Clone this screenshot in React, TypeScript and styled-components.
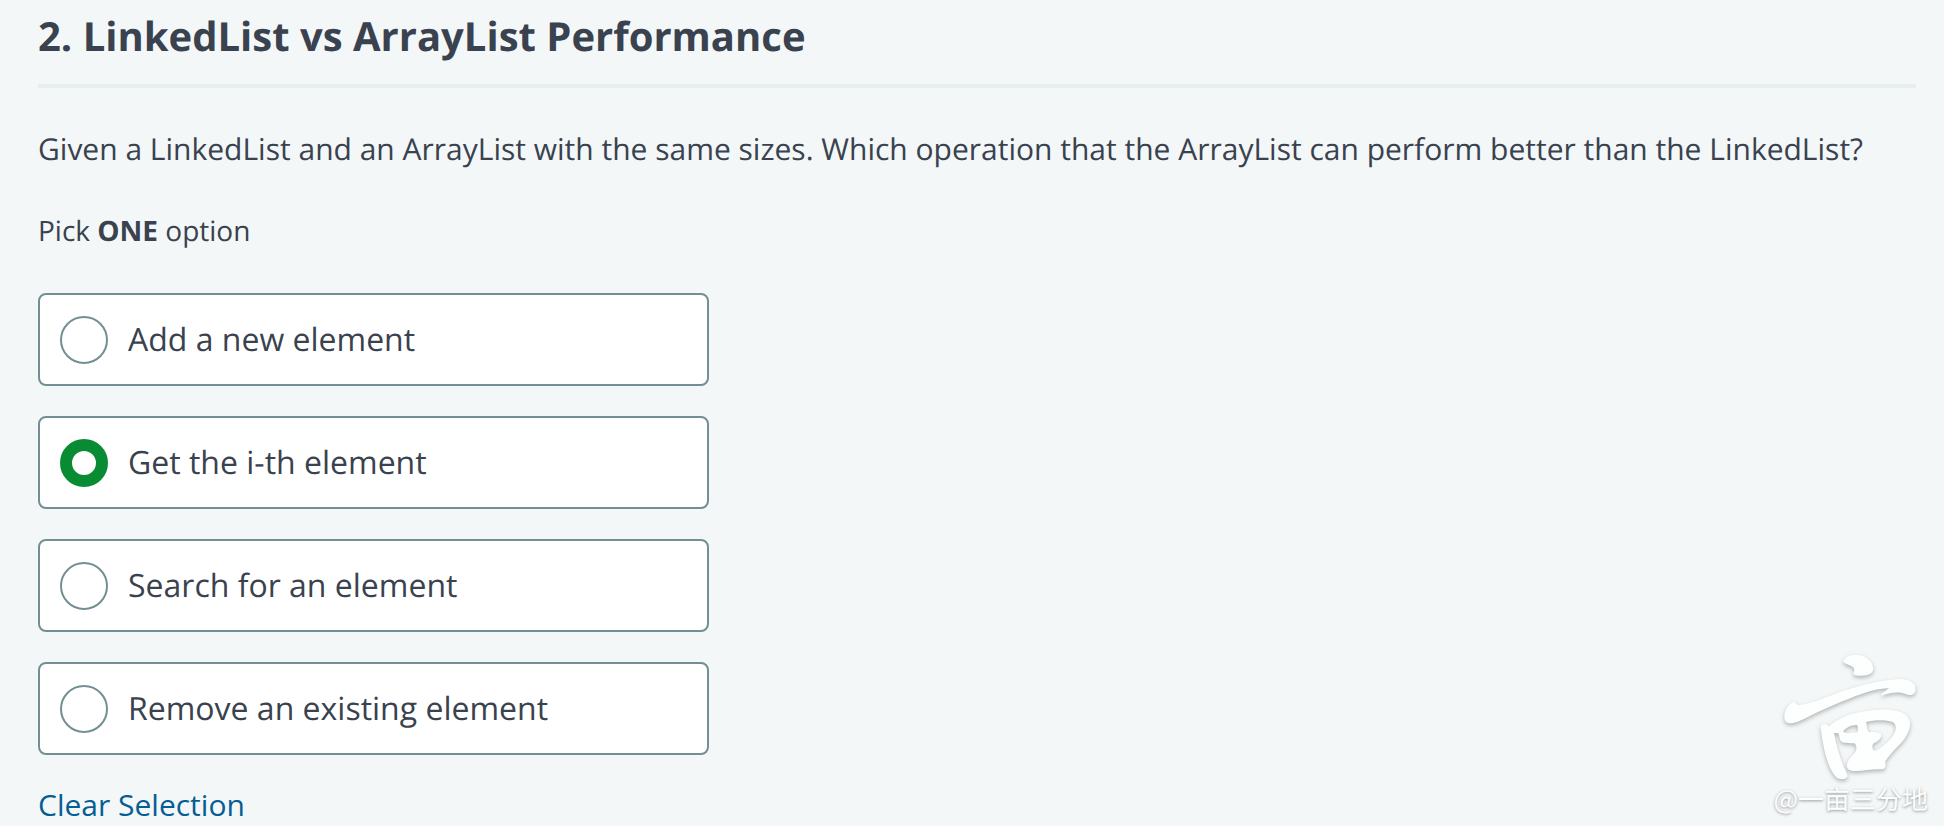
import React, { useState } from "react";
import styled, { createGlobalStyle } from "styled-components";

const GlobalStyle = createGlobalStyle`
  *, *::before, *::after {
    box-sizing: border-box;
  }
  body {
    margin: 0;
    background: #f3f7f8;
    color: #39424e;
    font-family: "Open Sans", "Noto Sans", sans-serif;
    text-rendering: geometricPrecision;
  }
`;

const Page = styled.main`
  position: relative;
  padding: 8px 28px 0 38px;
`;

const Title = styled.h1`
  margin: 0;
  padding-bottom: 20px;
  border-bottom: 4px solid #e6eeee;
  font-size: 40px;
  line-height: 56px;
  font-weight: 700;
`;

const Question = styled.p`
  margin: 41px 0 42px;
  font-size: 30px;
  line-height: 40px;
`;

const OptionGroup = styled.fieldset`
  margin: 0;
  padding: 0;
  border: 0;
  min-width: 0;
`;

const Hint = styled.legend`
  padding: 0;
  margin-bottom: 42px;
  font-size: 28px;
  line-height: 40px;
`;

const OptionList = styled.div`
  display: flex;
  flex-direction: column;
  gap: 30px;
  max-width: 671px;
`;

const Option = styled.label`
  display: flex;
  align-items: center;
  gap: 20px;
  min-height: 93px;
  padding: 20px;
  background: #fff;
  border: 2px solid #738f93;
  border-radius: 8px;
  font-size: 32px;
  line-height: 44px;
  cursor: pointer;
`;

const Radio = styled.input`
  appearance: none;
  flex: none;
  width: 48px;
  height: 48px;
  margin: 0;
  background: #fff;
  border: 2px solid #738f93;
  border-radius: 50%;
  cursor: pointer;

  &:checked {
    border: 12px solid #098b33;
  }
`;

const ClearButton = styled.button`
  display: block;
  margin: 30px 0 0;
  padding: 0;
  border: 0;
  background: none;
  color: #055e93;
  font: inherit;
  font-size: 30px;
  line-height: 40px;
  cursor: pointer;
`;

const Watermark = styled.div`
  position: absolute;
  right: 16px;
  bottom: 9px;
  display: flex;
  flex-direction: column;
  align-items: flex-end;
  color: #fdfefe;
  pointer-events: none;
`;

const WatermarkLogo = styled.svg`
  display: block;
  width: 136px;
  height: 132px;
  margin-right: 10px;
  overflow: visible;
  filter: drop-shadow(0 2px 2px rgba(0, 0, 0, 0.28));
`;

const WatermarkText = styled.span`
  font-family: "Noto Sans CJK SC", sans-serif;
  font-size: 26px;
  line-height: 34px;
  white-space: nowrap;
  text-shadow: 0 1px 3px rgba(0, 0, 0, 0.4);
`;

const options = [
  { id: "add", label: "Add a new element" },
  { id: "get", label: "Get the i-th element" },
  { id: "search", label: "Search for an element" },
  { id: "remove", label: "Remove an existing element" },
];

export default function App() {
  const [selected, setSelected] = useState<string | null>("get");

  return (
    <>
      <GlobalStyle />
      <Page>
        <Title>2. LinkedList vs ArrayList Performance</Title>
        <Question>
          Given a LinkedList and an ArrayList with the same sizes. Which
          operation that the ArrayList can perform better than the LinkedList?
        </Question>
        <OptionGroup>
          <Hint>
            Pick <strong>ONE</strong> option
          </Hint>
          <OptionList>
            {options.map(({ id, label }) => (
              <Option key={id} htmlFor={id}>
                <Radio
                  type="radio"
                  id={id}
                  name="answer"
                  value={id}
                  checked={selected === id}
                  onChange={() => setSelected(id)}
                />
                {label}
              </Option>
            ))}
          </OptionList>
        </OptionGroup>
        <ClearButton type="button" onClick={() => setSelected(null)}>
          Clear Selection
        </ClearButton>
        <Watermark>
          <WatermarkLogo viewBox="117 60 408 396" aria-hidden="true">
            <g fill="currentColor" fillRule="evenodd">
              <path d="M300 93C308 78 324 73 345 74C373 78 391 97 391 118C389 132 374 138 351 137C337 137 329 133 331 128C337 120 334 113 325 108C316 104 304 101 300 93Z" />
              <path d="M124 258C125 238 139 220 151 216C160 216 158 225 168 225C200 222 234 208 280 190C335 170 404 151 470 147C496 147 518 158 518 176C517 191 510 197 494 194C466 181 438 190 413 197C417 188 428 183 438 175C404 175 365 187 322 205C276 222 230 244 184 266C167 274 154 281 140 280C128 278 123 270 124 258Z" />
              <path d="M233 293C233 284 241 280 248 283L259 289C270 276 297 262 323 253C358 243 399 238 437 239C475 241 498 255 501 276C503 303 486 329 463 350C447 367 435 382 427 393C429 407 428 416 417 418C390 416 365 422 338 423C321 423 311 417 312 408C312 390 326 380 337 366C343 357 340 347 335 340C325 339 309 341 299 337C289 333 290 320 287 310L273 309C278 340 288 373 299 402C304 416 312 427 314 438C313 447 294 450 284 445C266 431 253 398 245 364C240 340 235 316 233 293ZM300 305C307 293 326 284 341 285C347 288 345 298 343 307C330 309 313 312 300 305ZM369 276C397 268 432 270 449 276C463 284 460 303 448 320C434 338 414 354 397 362C388 362 386 351 390 341C404 336 414 326 415 316C413 306 394 304 379 307C371 301 372 285 369 276Z" />
            </g>
          </WatermarkLogo>
          <WatermarkText>@一亩三分地</WatermarkText>
        </Watermark>
      </Page>
    </>
  );
}
